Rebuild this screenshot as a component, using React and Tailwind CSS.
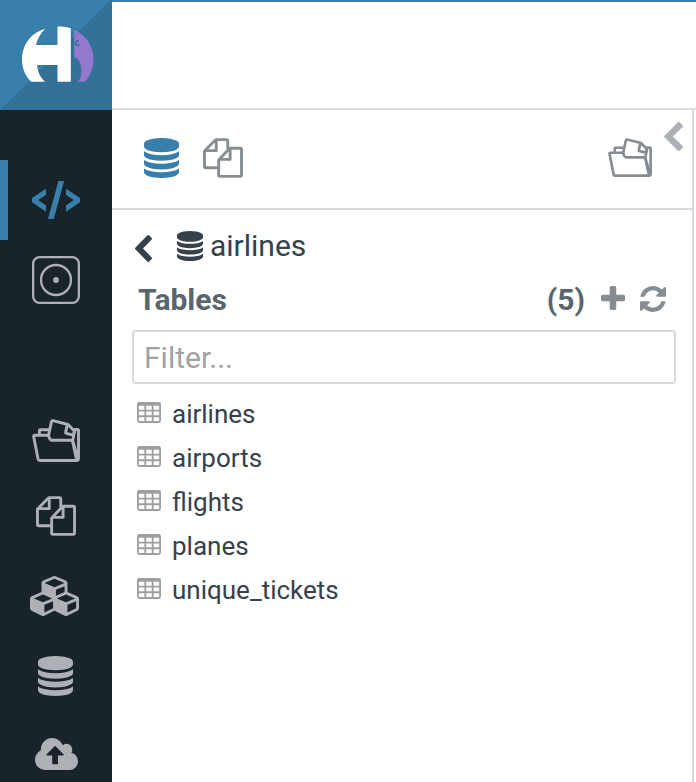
const PATHS = {
  database: 'M768 768q237 0 443-43t325-127v170q0 69-103 128t-280 93.5-385 34.5-385-34.5-280-93.5-103-128v-170q119 84 325 127t443 43zm0 768q237 0 443-43t325-127v170q0 69-103 128t-280 93.5-385 34.5-385-34.5-280-93.5-103-128v-170q119 84 325 127t443 43zm0-384q237 0 443-43t325-127v170q0 69-103 128t-280 93.5-385 34.5-385-34.5-280-93.5-103-128v-170q119 84 325 127t443 43zm0-1152q208 0 385 34.5t280 93.5 103 128v128q0 69-103 128t-280 93.5-385 34.5-385-34.5-280-93.5-103-128v-128q0-69 103-128t280-93.5 385-34.5z',
  cubes: 'M640 1632l384-192v-314l-384 164v342zm-64-454l404-173-404-173-404 173zm1088 454l384-192v-314l-384 164v342zm-64-454l404-173-404-173-404 173zm-448-293l384-165v-266l-384 164v267zm-64-379l441-189-441-189-441 189zm1088 518v416q0 36-19 67t-52 47l-448 224q-25 14-57 14t-57-14l-448-224q-4-2-7-4-2 2-7 4l-448 224q-25 14-57 14t-57-14l-448-224q-33-16-52-47t-19-67v-416q0-38 21.5-70t56.5-48l434-186v-400q0-38 21.5-70t56.5-48l448-192q23-10 50-10t50 10l448 192q35 16 56.5 48t21.5 70v400l434 186q36 16 57 48t21 70z',
  upload: 'M1280 928q0-14-9-23l-352-352q-9-9-23-9t-23 9l-351 351q-10 12-10 24 0 14 9 23t23 9h224v352q0 13 9.5 22.5t22.5 9.5h192q13 0 22.5-9.5t9.5-22.5v-352h224q13 0 22.5-9.5t9.5-22.5zm640 288q0 159-112.5 271.5t-271.5 112.5h-1088q-185 0-316.5-131.5t-131.5-316.5q0-130 70-240t188-165q-2-30-2-43 0-212 150-362t362-150q156 0 285.5 87t188.5 231q71-62 166-62 106 0 181 75t75 181q0 76-41 138 130 31 213.5 135.5t83.5 238.5z',
  chevron: 'M1427 301l-531 531 531 531q19 19 19 45t-19 45l-166 166q-19 19-45 19t-45-19l-742-742q-19-19-19-45t19-45l742-742q19-19 45-19t45 19l166 166q19 19 19 45t-19 45z',
  plus: 'M1600 736v192q0 40-28 68t-68 28h-416v416q0 40-28 68t-68 28h-192q-40 0-68-28t-28-68v-416h-416q-40 0-68-28t-28-68v-192q0-40 28-68t68-28h416v-416q0-40 28-68t68-28h192q40 0 68 28t28 68v416h416q40 0 68 28t28 68z',
  refresh: 'M1639 1056q0 5-1 7-64 268-268 434.5t-478 166.5q-146 0-282.5-55t-243.5-157l-129 129q-19 19-45 19t-45-19-19-45v-448q0-26 19-45t45-19h448q26 0 45 19t19 45-19 45l-137 137q71 66 161 102t187 36q134 0 250-65t186-179q11-17 53-117 8-23 30-23h192q13 0 22.5 9.5t9.5 22.5zm25-800v448q0 26-19 45t-45 19h-448q-26 0-45-19t-19-45 19-45l138-138q-148-137-349-137-134 0-250 65t-186 179q-11 17-53 117-8 23-30 23h-199q-13 0-22.5-9.5t-9.5-22.5v-7q65-268 270-434.5t480-166.5q146 0 284 55.5t245 156.5l130-129q19-19 45-19t45 19 19 45z',
};

function Glyph({ name, box, className }) {
  return (
    <svg viewBox={box} preserveAspectRatio="none" fill="currentColor" className={`shrink-0 ${className}`}>
      <path d={PATHS[name]} />
    </svg>
  );
}

const Database = ({ className }) => <Glyph name="database" box="0 0 1536 1792" className={className} />;
const Chevron = ({ className }) => <Glyph name="chevron" box="410 26 1036 1612" className={className} />;

function Documents({ className }) {
  return (
    <svg viewBox="36 496 40.4 40" fill="none" stroke="currentColor" strokeWidth="2.9" strokeLinejoin="round" className={`shrink-0 ${className}`}>
      <path d="M51 525.8H38.8Q37.5 525.8 37.5 524.6V509L48.8 497.5H59.6Q61 497.5 61 498.6V507" />
      <path d="M49.4 497.4V508.6H37.6" />
      <path d="M51.8 518L63 506.2H73.6Q74.9 506.2 74.9 507.4V533.2Q74.9 534.5 73.6 534.5H53Q51.8 534.5 51.8 533.2Z" />
      <path d="M63.4 506.4V517.4H52" />
    </svg>
  );
}

function Folder({ className }) {
  return (
    <svg viewBox="32 418.5 48 43" preserveAspectRatio="none" fill="none" stroke="currentColor" strokeWidth="2.9" strokeLinejoin="round" strokeLinecap="round" className={`shrink-0 ${className}`}>
      <path d="M48.6 434.8H34.8Q33.4 434.8 33.7 436.2L38.1 458.6Q38.5 460 39.8 460H76.2Q78.5 460 78.5 457.8V430.2Q78.5 429 77.3 429H74.8" />
      <path d="M39.4 434V430.2Q39.4 429.3 40.3 429.3H48.5" />
      <path d="M48.2 434.8L50 438.7Q50.5 439.8 51.8 439.8H72.3L76.8 460M74.6 430.5L72.7 440L77.7 458" />
      <path d="M48.6 434.6L51.5 421Q51.8 420 52.8 420.2L68 424L74.4 430.6L73.4 434.6L66.6 433Q65.4 432.8 65.6 431.6L67.4 424.4" />
    </svg>
  );
}

function Code() {
  return (
    <svg viewBox="32 181 48 38" fill="currentColor" className="h-[38px] w-12">
      <path d="M46 188.7V195L38.3 200.1L46 205.4V211.8L32 202.2V198Z" />
      <path d="M66 188.7V195L73.7 200.1L66 205.4V211.8L80 202.2V198Z" />
      <path d="M58.4 181H64.1L53.7 219H48Z" />
    </svg>
  );
}

function Dice() {
  return (
    <svg viewBox="0 0 48 48" fill="none" stroke="currentColor" strokeWidth="2.3" className="size-12">
      <rect x="1.15" y="1.15" width="45.7" height="45.7" rx="6.5" />
      <circle cx="24" cy="24" r="15" />
      <circle cx="24" cy="24" r="2.9" fill="currentColor" stroke="none" />
    </svg>
  );
}

function Grid() {
  const cells = [0, 1, 2].flatMap((r) => [0, 1, 2].map((c) => `M${128 + c * 512} ${384 + r * 384}h384v256h-384z`)).join('');
  return (
    <svg viewBox="0 128 1664 1408" preserveAspectRatio="none" fill="currentColor" fillRule="evenodd" className="mt-[-3px] h-[21px] w-6 shrink-0 text-[#9f9f9f]">
      <path d={`M160 128H1504Q1664 128 1664 288V1376Q1664 1536 1504 1536H160Q0 1536 0 1376V288Q0 128 160 128Z${cells}`} />
    </svg>
  );
}

function Logo() {
  return (
    <svg viewBox="0 0 112 110" className="h-[110px] w-28 shrink-0">
      <path fill="#387fab" d="M0 0H112V110H0Z" />
      <path fill="#337197" d="M110 0H112V110H0Z" />
      <path fill="#fff" d="M45 29C29.5 33 22 46.5 22 60C22 69 26 77 31.2 81.7H45C40.5 77.5 37.5 72 37.2 65H57.5V81.7H70.8V28.2Q64 25.8 57.5 26.6V45H36Q38 36 45 29Z" />
      <path fill="#9379cd" d="M74.2 29.7C86 35 93.5 46 93.5 59.5C93.5 68 90.5 75.5 85 81.7H77.5C81 78.5 81.5 74.5 81.2 69C80.8 62 78.5 58.5 74.2 57.3Z" />
      <path fill="none" stroke="#337197" strokeWidth="1.6" d="M78.8 41.2A2.2 2.2 0 1 0 79.5 44.5" />
    </svg>
  );
}

const TABLES = ['airlines', 'airports', 'flights', 'planes', 'unique_tickets'];

export default function App() {
  return (
    <div className="flex h-[782px] w-[696px] overflow-hidden bg-white font-[Roboto,sans-serif] text-[#36414b]">
      <nav className="flex w-28 shrink-0 flex-col overflow-hidden bg-[#19242a] text-[#adb0b5]">
        <Logo />
        <div className="mt-[50px] flex h-20 items-center justify-center border-l-8 border-[#387fab] pr-2 text-[#387fab]">
          <Code />
        </div>
        <div className="flex h-20 items-center justify-center"><Dice /></div>
        <div className="mt-20 flex h-20 items-center justify-center"><Folder className="h-[43px] w-12" /></div>
        <div className="flex h-[72px] items-center justify-center"><Documents className="h-10 w-10" /></div>
        <div className="flex h-[88px] items-center pl-[30px]"><Glyph name="cubes" box="0 0 2176 1792" className="h-10 w-[49px]" /></div>
        <div className="flex h-[72px] items-center pl-[38px]"><Database className="h-10 w-[35px]" /></div>
        <div className="flex shrink-0 justify-center pt-[26px]"><Glyph name="upload" box="0 192 1920 1408" className="h-8 w-[43px]" /></div>
      </nav>
      <div className="flex min-w-0 flex-1 flex-col">
        <header className="h-[110px] shrink-0 border-t-2 border-b-2 border-t-[#387fab] border-b-[#dcdcdc]" />
        <div className="flex flex-1">
          <section className="w-[582px] border-r-2 border-[#d8d7dd]">
            <div className="flex h-[100px] items-start border-b-2 border-[#d8d7dd] pt-7 pl-8 text-[#858d92]">
              <Database className="h-10 w-[35px] text-[#387fab]" />
              <Documents className="ml-6 h-10 w-10" />
              <Folder className="ml-auto h-[39px] w-11" />
              <Chevron className="mt-[-16px] mr-[9px] ml-3 h-[29px] w-[19px] text-[#adb1b7]" />
            </div>
            <div className="flex h-[70px] items-center pl-[23px]">
              <Chevron className="mt-[6px] h-[27px] w-[17px]" />
              <Database className="mt-[2px] ml-[25px] h-[30px] w-[26px]" />
              <span className="mt-[2px] ml-[7px] text-[30px] leading-9">airlines</span>
            </div>
            <div className="flex h-[50px] items-start pr-[26px] pl-[26px] text-[#5b656d]">
              <span className="text-[30px] leading-10 font-bold">Tables</span>
              <span className="ml-auto text-[30px] leading-10 font-bold">(5)</span>
              <Glyph name="plus" box="192 128 1408 1408" className="mt-[6px] ml-4 size-6 text-[#858d92]" />
              <Glyph name="refresh" box="128 128 1536 1536" className="mt-[6px] ml-[15px] size-[26px] text-[#858d92]" />
            </div>
            <div className="mr-4 ml-5 flex h-[54px] items-center rounded-[4px] border-2 border-[#d8d7dd] px-[10px] text-[30px] text-[#a2a2a2]">Filter...</div>
            <ul className="mt-2 pl-[25px]">
              {TABLES.map((name) => (
                <li key={name} className="flex h-11 items-center">
                  <Grid />
                  <span className="ml-[11px] text-[26px] leading-8">{name}</span>
                </li>
              ))}
            </ul>
          </section>
        </div>
      </div>
    </div>
  );
}
